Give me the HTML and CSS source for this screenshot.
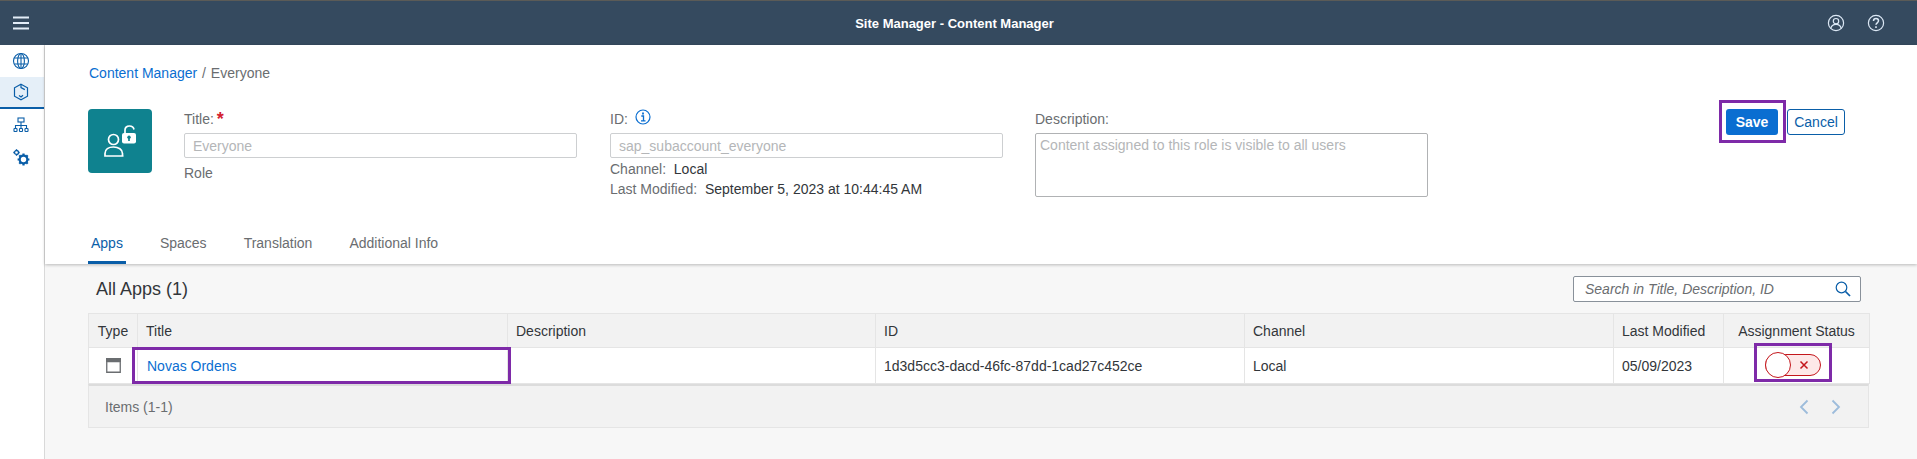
FILE: index.html
```html
<!DOCTYPE html>
<html>
<head>
	<title>Site Manager - Content Manager</title>
	<link rel="stylesheet" href="styles.css">
</head>
<body>
	<header class="shell">
		<button class="shell-btn menu-btn" type="button" aria-label="Menu">
			<svg width="18" height="14" viewBox="0 0 18 14"><path d="M1 1.500h16M1 7h16M1 12.500h16" stroke="#e3edf8" stroke-width="2" fill="none"/></svg>
		</button>
		<div class="shell-title">Site Manager - Content Manager</div>
		<div class="shell-actions">
			<svg width="18" height="18" viewBox="0 0 18 18" fill="none" stroke="#dce8f5" stroke-width="1.200"><circle cx="9" cy="9" r="7.600"/><circle cx="9" cy="7.200" r="2.700"/><path d="M3.900 14.400c.4-2.800 2.300-4.100 5.100-4.100s4.700 1.300 5.100 4.100"/></svg>
			<svg width="18" height="18" viewBox="0 0 18 18" fill="none" stroke="#dce8f5" stroke-width="1.200"><circle cx="9" cy="9" r="7.600"/><path d="M6.500 7c0-1.500 1.100-2.500 2.500-2.500s2.500 1 2.500 2.300c0 2-2.500 2-2.500 4" stroke-width="1.500"/><path d="M9 12.300v1.600" stroke-width="1.600"/></svg>
		</div>
	</header>

	<div class="layout">
		<nav class="side">
			<a class="side-item">
				<svg width="18" height="18" viewBox="0 0 18 18" fill="none" stroke="#0a5ea8" stroke-width="1.100"><circle cx="9" cy="9" r="7.500"/><ellipse cx="9" cy="9" rx="3.400" ry="7.500"/><path d="M2.200 6h13.600M2.200 12h13.600M9 1.500v15"/></svg>
			</a>
			<a class="side-item active">
				<svg width="16" height="18" viewBox="0 0 16 18" fill="none" stroke="#0a5ea8" stroke-width="1.200"><path d="M8 1.200l6.500 3.600v8.400L8 16.800l-6.500-3.600V4.800z"/><path d="M8 1.200v3.400l3.800 2M6 12.500l2 1.500 2-1.800"/></svg>
			</a>
			<a class="side-item">
				<svg width="16" height="16" viewBox="0 0 16 16" fill="none" stroke="#0a5ea8" stroke-width="1.100"><rect x="5" y="1" width="6" height="4"/><path d="M8 5v3.500M2.500 11V8.500h11V11M8 8.500V11"/><rect x="1" y="11.500" width="3" height="3" rx=".6"/><rect x="6.500" y="11.500" width="3" height="3" rx=".6"/><rect x="12" y="11.500" width="3" height="3" rx=".6"/></svg>
			</a>
			<a class="side-item">
				<svg width="17" height="17" viewBox="0 0 17 17" fill="none" stroke="#0a5ea8"><circle cx="3.500" cy="3.500" r="2" stroke-width="1.300"/><path d="M3.500 .3v1M3.500 5.700v1M.3 3.500h1M5.700 3.500h1" stroke-width="1.300"/><circle cx="10.500" cy="10.500" r="3.800" stroke-width="2.200"/><path d="M10.500 4.600v2M10.500 14.400v2M4.600 10.500h2M14.400 10.500h2M6.300 6.300l1.400 1.400M13.300 13.300l1.400 1.400M14.700 6.300l-1.400 1.400M7.700 13.300l-1.400 1.400" stroke-width="2.200"/></svg>
			</a>
		</nav>

		<main class="page">
			<section class="head">
				<div class="crumbs"><a class="link">Content Manager</a> <span class="crumb-sep">/</span> Everyone</div>
				<div class="form-row">
					<div class="tile">
						<svg width="32" height="32" viewBox="0 0 32 32" fill="none" stroke="#fff" stroke-width="1.700"><circle cx="9.500" cy="14.500" r="5"/><path d="M1 31v-2.500c0-4 3.500-6.500 8.500-6.500s9 2.500 9 6.500V31zM.5 31h19"/><rect x="18" y="8" width="14" height="10.500" rx="2" fill="#fff" stroke="none"/><path d="M21 8V5C21 2.500 23 1 25.500 1s4 1.300 4.500 3.500" stroke-width="1.700"/><circle cx="25" cy="12.300" r="1.700" fill="#0f828f" stroke="none"/><path d="M25 12.500v3.500" stroke="#0f828f" stroke-width="1.700"/></svg>
					</div>
					<div class="field">
						<label class="lbl">Title:<span class="req">*</span></label>
						<input class="inp" type="text" placeholder="Everyone" disabled>
						<div class="meta meta-role">Role</div>
					</div>
					<div class="field">
						<label class="lbl">ID:
							<svg class="info" width="16" height="16" viewBox="0 0 16 16" fill="none" stroke="#0a6ed1"><circle cx="8" cy="8" r="7" stroke-width="1.200"/><path d="M8 3.500v2" stroke-width="1.800"/><path d="M6.300 7h2.200v4.800M6 11.800h4.500" stroke-width="1.300"/></svg>
						</label>
						<input class="inp" type="text" placeholder="sap_subaccount_everyone" disabled>
						<div class="meta meta-channel">Channel:&nbsp; <span class="val">Local</span></div>
						<div class="meta meta-mod">Last Modified:&nbsp; <span class="val">September 5, 2023 at 10:44:45 AM</span></div>
					</div>
					<div class="field field-desc">
						<label class="lbl">Description:</label>
						<textarea class="inp area" placeholder="Content assigned to this role is visible to all users" disabled></textarea>
					</div>
					<div class="actions">
						<div class="mark mark-save"><button class="btn btn-save" type="button">Save</button></div>
						<button class="btn btn-cancel" type="button">Cancel</button>
					</div>
				</div>
				<div class="tabs">
					<a class="tab on">Apps</a>
					<a class="tab">Spaces</a>
					<a class="tab">Translation</a>
					<a class="tab">Additional Info</a>
				</div>
			</section>

			<section class="apps">
				<div class="apps-bar">
					<h2 class="apps-title">All Apps (1)</h2>
					<div class="search">
						<span class="search-text">Search in Title, Description, ID</span>
						<svg width="16" height="16" viewBox="0 0 16 16" fill="none" stroke="#0a5ea8"><circle cx="6.500" cy="6.500" r="5.300" stroke-width="1.200"/><path d="M10.500 10.500l4.500 4.500" stroke-width="1.700"/></svg>
					</div>
				</div>
				<table class="grid">
					<colgroup>
						<col class="c-type"><col class="c-title"><col class="c-desc"><col class="c-id"><col class="c-chan"><col class="c-mod"><col class="c-stat">
					</colgroup>
					<thead>
						<tr>
							<th class="center">Type</th>
							<th>Title</th>
							<th>Description</th>
							<th>ID</th>
							<th>Channel</th>
							<th>Last Modified</th>
							<th class="center">Assignment Status</th>
						</tr>
					</thead>
					<tbody>
						<tr>
							<td class="center">
								<svg class="win" width="15" height="15" viewBox="0 0 15 15"><path d="M.75 3.500h13.500v10.750H.75z" fill="#fff" stroke="#6a6d70" stroke-width="1.300"/><rect x="0" y="0" width="15" height="4" fill="#6a6d70"/></svg>
							</td>
							<td class="cell-title"><a class="link">Novas Ordens</a><span class="mark mark-title"></span></td>
							<td></td>
							<td>1d3d5cc3-dacd-46fc-87dd-1cad27c452ce</td>
							<td>Local</td>
							<td>05/09/2023</td>
							<td class="cell-stat">
								<span class="mark mark-switch"></span>
								<span class="switch">
									<span class="knob"></span>
									<svg class="switch-x" width="10" height="10" viewBox="0 0 10 10"><path d="M1.500 1.500l7 7M8.500 1.500l-7 7" stroke="#c4161c" stroke-width="1.500" fill="none"/></svg>
								</span>
							</td>
						</tr>
					</tbody>
				</table>
				<div class="grid-foot">
					<span>Items (1-1)</span>
					<div class="pager">
						<svg width="10" height="16" viewBox="0 0 10 16" fill="none" stroke="#9dbcdb" stroke-width="1.800"><path d="M8.500 1.500L2 8l6.500 6.500"/></svg>
						<svg width="10" height="16" viewBox="0 0 10 16" fill="none" stroke="#9dbcdb" stroke-width="1.800"><path d="M1.500 1.500L8 8l-6.500 6.500"/></svg>
					</div>
				</div>
			</section>
		</main>
	</div>
</body>
</html>
```
FILE: styles.css
```css
* {
	box-sizing: border-box;
}
html, body {
	height: 100%;
}
body {
	margin: 0;
	display: flex;
	flex-direction: column;
	overflow: hidden;
	font: 14px "Liberation Sans", Arial, sans-serif;
	color: #32363a;
	background: #f7f7f7;
}
a.link {
	color: #0a6ed1;
}

/* top bar */
.shell {
	flex: none;
	height: 45px;
	display: flex;
	align-items: center;
	background: #354a5f;
	border-top: 1px solid #5b5b57;
}
.shell-btn {
	background: none;
	border: 0;
	padding: 0;
	display: flex;
}
.menu-btn {
	margin-left: 12px;
}
.shell-title {
	flex: 1;
	text-align: center;
	color: #fff;
	font-weight: bold;
	font-size: 13px;
	padding-left: 52px;
}
.shell-actions {
	display: flex;
	gap: 22px;
	margin-right: 32px;
}

.layout {
	flex: 1;
	display: flex;
	min-height: 0;
}

/* left nav */
.side {
	flex: none;
	width: 45px;
	background: #fff;
	border-right: 1px solid #d9d9d9;
}
.side-item {
	height: 32px;
	display: flex;
	align-items: center;
	justify-content: center;
	padding-right: 2px;
}
.side-item.active {
	background: #e5eff8;
	border-bottom: 2px solid #0a5ea8;
}

.page {
	flex: 1;
	min-width: 0;
}

/* object header */
.head {
	height: 219px;
	background: #fff;
	box-shadow: 0 1px 3px rgba(0, 0, 0, .25);
	padding: 20px 0 0 43px;
	position: relative;
	display: flex;
	flex-direction: column;
}
.crumbs {
	line-height: 16px;
	color: #6a6d70;
	padding-left: 1px;
}
.crumb-sep {
	margin: 0 1px;
}
.form-row {
	display: flex;
	margin-top: 28px;
	height: 88px;
}
.tile {
	flex: none;
	width: 64px;
	height: 64px;
	border-radius: 4px;
	background: #0f828f;
	display: flex;
	align-items: center;
	justify-content: center;
	margin-right: 32px;
}
.field {
	flex: none;
	width: 393px;
	margin-right: 33px;
	display: flex;
	flex-direction: column;
}
.field-desc {
	margin-left: -1px;
}
.lbl {
	flex: none;
	height: 24px;
	color: #6a6d70;
	line-height: 20px;
}
.req {
	color: #d32030;
	font-size: 18px;
	font-weight: bold;
	margin-left: 3px;
	line-height: 14px;
	vertical-align: -1px;
}
.info {
	vertical-align: -1px;
	margin-left: 3px;
}
.inp {
	width: 100%;
	height: 25px;
	flex: none;
	padding: 0 8px;
	border: 1px solid #cdcfd1;
	border-radius: 2px;
	background: #fff;
	font: 14px "Liberation Sans", Arial, sans-serif;
}
.inp::placeholder {
	color: #b4b6b8;
	opacity: 1;
}
.area {
	height: 64px;
	border-color: #b0b2b4;
	padding: 3px 4px;
	resize: none;
}
.meta {
	flex: none;
	color: #6a6d70;
	line-height: 20px;
}
.meta-role {
	margin-top: 5px;
}
.meta-channel {
	margin-top: 1px;
}
.val {
	color: #32363a;
}
.actions {
	display: flex;
	align-items: flex-start;
	gap: 1px;
	margin-left: 258px;
	flex: none;
}
.btn {
	height: 26px;
	border-radius: 3px;
	font: 14px "Liberation Sans", Arial, sans-serif;
	padding: 0;
}
.btn-save {
	width: 52px;
	border: 0;
	background: #0a6ed1;
	color: #fff;
	font-weight: bold;
}
.btn-cancel {
	width: 58px;
	border: 1px solid #0a5ea8;
	background: #fff;
	color: #0a5ea8;
}

/* purple annotation boxes */
.mark-save {
	border: 3px solid #7e2aa8;
	padding: 6px 5px 0 4px;
	margin-top: -9px;
	height: 43px;
	width: 67px;
	display: flex;
	align-items: flex-start;
}
.mark-title, .mark-switch {
	position: absolute;
	border: 3px solid #7e2aa8;
	pointer-events: none;
}
.mark-title {
	left: -6px;
	right: -4px;
	top: -1px;
	bottom: -1px;
}
.mark-switch {
	left: 30px;
	width: 78px;
	top: -5px;
	height: 39px;
}

/* tabs */
.tabs {
	margin-top: auto;
	display: flex;
	gap: 31px;
	height: 38px;
}
.tab {
	padding: 0 3px;
	color: #6a6d70;
	line-height: 34px;
}
.tab.on {
	color: #0a5ea8;
	border-bottom: 3px solid #0a5ea8;
}

/* apps list */
.apps {
	padding: 0 48px 0 43px;
}
.apps-bar {
	display: flex;
	justify-content: space-between;
	height: 49px;
	padding: 12px 8px 0 8px;
}
.apps-title {
	margin: 0;
	font-size: 18px;
	font-weight: normal;
	line-height: 26px;
}
.search {
	width: 288px;
	height: 26px;
	display: flex;
	align-items: center;
	justify-content: space-between;
	padding: 0 9px 0 11px;
	background: #fff;
	border: 1px solid #89919a;
	border-radius: 2px;
}
.search-text {
	font-style: italic;
	color: #6a6d70;
}
.grid {
	width: 1781px;
	table-layout: fixed;
	border-collapse: collapse;
}
.c-type { width: 49px; }
.c-title { width: 370px; }
.c-desc { width: 368px; }
.c-id { width: 369px; }
.c-chan { width: 369px; }
.c-mod { width: 110px; }
.c-stat { width: 146px; }
.grid th {
	height: 34px;
	background: #f2f2f2;
	border: 1px solid #e5e5e5;
	font-weight: normal;
	text-align: left;
	padding: 0 8px;
}
.grid td {
	height: 36px;
	background: #fff;
	border: 1px solid #e5e5e5;
	padding: 0 8px;
}
.grid .center {
	text-align: center;
}
.win {
	display: block;
	margin: 0 auto;
}
.cell-title, .cell-stat {
	position: relative;
}
.cell-title a {
	margin-left: 1px;
}
.switch {
	position: absolute;
	left: 41px;
	top: 6px;
	width: 56px;
	height: 22px;
	border: 1px solid #c4161c;
	border-radius: 11px;
	background: #fde8e8;
}
.knob {
	position: absolute;
	left: -1px;
	top: -3px;
	width: 26px;
	height: 26px;
	border: 1px solid #c4161c;
	border-radius: 50%;
	background: #fff;
}
.switch-x {
	position: absolute;
	right: 11px;
	top: 5px;
}
.grid-foot {
	width: 1781px;
	height: 44px;
	display: flex;
	align-items: center;
	justify-content: space-between;
	padding: 0 27px 0 16px;
	background: #f2f2f2;
	border: 1px solid #e5e5e5;
	border-top: 2px solid #dcdcdc;
	color: #6a6d70;
}
.pager {
	display: flex;
	gap: 22px;
}
```
